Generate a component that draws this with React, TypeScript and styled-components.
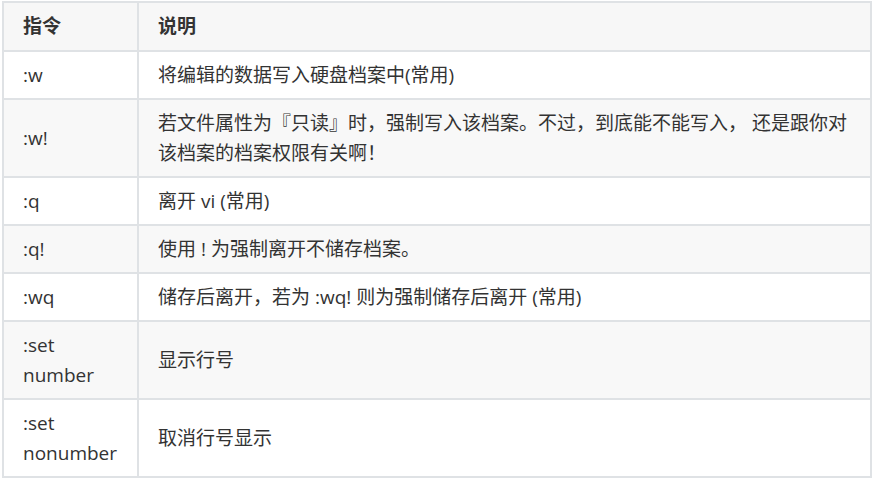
import styled, { createGlobalStyle } from "styled-components";

const GlobalStyle = createGlobalStyle`
  body {
    margin: 1px 0 0 2px;
    background: #ffffff;
    font-family: "Open Sans", "Noto Sans CJK SC", sans-serif;
    color: #333333;
  }
`;

const Table = styled.table`
  width: 870px;
  border-collapse: collapse;
  font-size: 19px;
  line-height: 30px;
`;

const HeadCell = styled.th`
  border: 2px solid #dfe2e5;
  background-color: #f7f7f7;
  text-align: left;
  font-weight: 700;
  padding: 8px 19px 9px;
`;

const Row = styled.tr<{ $striped: boolean }>`
  background-color: ${(p) => (p.$striped ? "#f8f8f8" : "#ffffff")};
`;

const Cell = styled.td<{ $narrow?: boolean }>`
  border: 2px solid #dfe2e5;
  padding: 8px 19px;
  vertical-align: middle;
  width: ${(p) => (p.$narrow ? "95px" : "auto")};
`;

type Command = {
  cmd: string;
  desc: string;
};

const commands: Command[] = [
  { cmd: ":w", desc: "将编辑的数据写入硬盘档案中(常用)" },
  {
    cmd: ":w!",
    desc: "若文件属性为『只读』时，强制写入该档案。不过，到底能不能写入， 还是跟你对该档案的档案权限有关啊！",
  },
  { cmd: ":q", desc: "离开 vi (常用)" },
  { cmd: ":q!", desc: "使用 ! 为强制离开不储存档案。" },
  { cmd: ":wq", desc: "储存后离开，若为 :wq! 则为强制储存后离开 (常用)" },
  { cmd: ":set number", desc: "显示行号" },
  { cmd: ":set nonumber", desc: "取消行号显示" },
];

function App() {
  return (
    <>
      <GlobalStyle />
      <Table>
        <thead>
          <tr>
            <HeadCell style={{ width: "95px" }}>指令</HeadCell>
            <HeadCell>说明</HeadCell>
          </tr>
        </thead>
        <tbody>
          {commands.map((c, i) => (
            <Row key={c.cmd} $striped={i % 2 === 1}>
              <Cell $narrow>{c.cmd}</Cell>
              <Cell>{c.desc}</Cell>
            </Row>
          ))}
        </tbody>
      </Table>
    </>
  );
}

export default App;
